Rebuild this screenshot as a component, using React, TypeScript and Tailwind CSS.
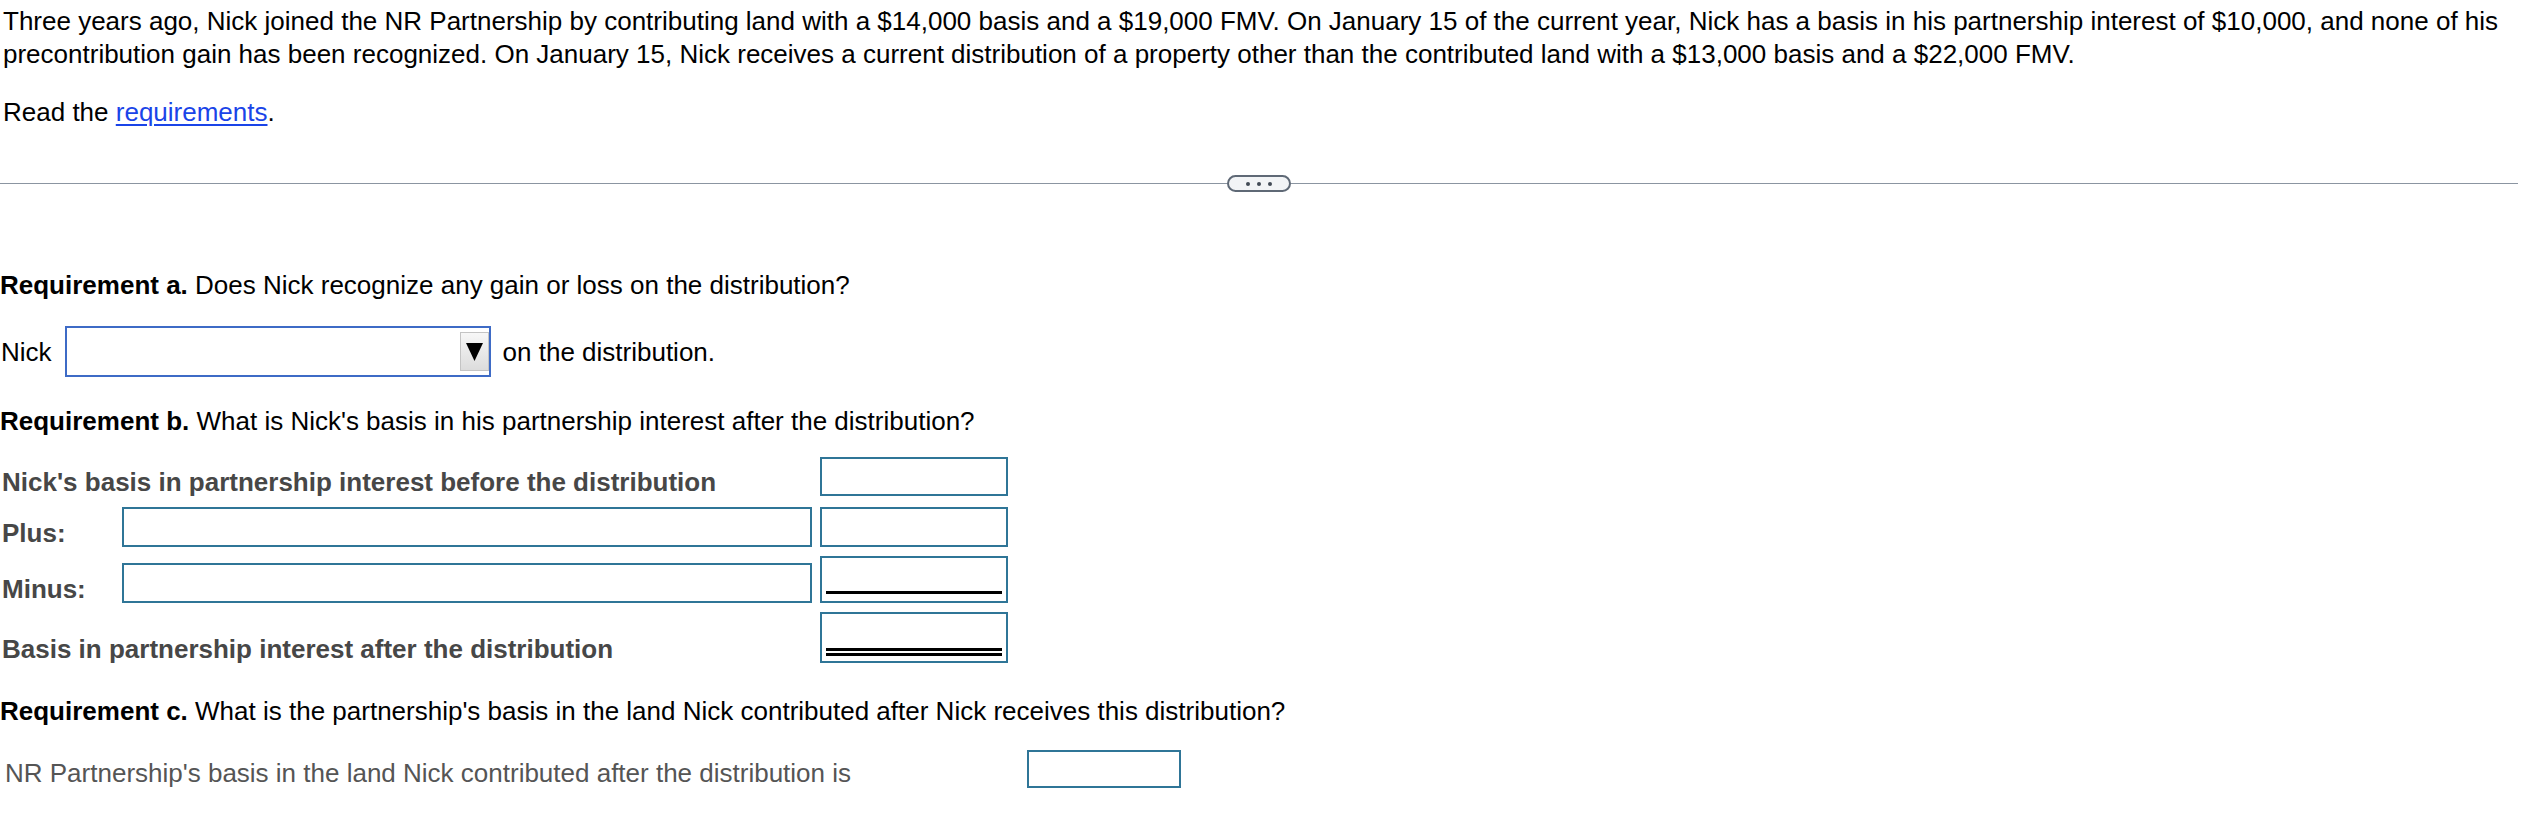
import React from "react";

const boxCls = "shrink-0 border-2 border-[#2f7597] bg-white";

function AmountBox({ h, line }: { h: string; line?: "single" | "double" }) {
  return (
    <div className={`${boxCls} ml-[8px] w-[188px] ${h} flex flex-col justify-end px-[4px] ${line === "double" ? "pb-[5px]" : "pb-[7px]"}`}>
      {line === "single" && <div className="h-[3px] bg-black" />}
      {line === "double" && <div className="h-[8px] border-y-[3px] border-black" />}
    </div>
  );
}

export default function App() {
  return (
    <div className="min-h-screen bg-white font-['Liberation_Sans',Arial,sans-serif] text-[26px] text-black">
      <p className="pl-[3px] pt-[5px] leading-[33px]">
        Three years ago, Nick joined the NR Partnership by contributing land with a $14,000 basis and a $19,000 FMV. On January 15 of the
        current year, Nick has a basis in his partnership interest of $10,000, and none of his precontribution gain has been recognized. On
        January 15, Nick receives a current distribution of a property other than the contributed land with a $13,000 basis and a $22,000 FMV.
      </p>
      <p className="mt-[25px] pl-[3px] leading-[33px]">
        Read the{" "}
        <a href="#" className="text-[#1a44e8] underline underline-offset-[3px]">
          requirements
        </a>
        .
      </p>

      {/* divider */}
      <div className="mt-[46px] flex h-[17px] items-center pr-[14px]">
        <div className="h-px flex-1 bg-[#8b95a1]" />
        <button
          type="button"
          className="flex h-[17px] w-[64px] items-center justify-center gap-[7px] rounded-full border-2 border-[#5f6976] bg-[#f2f4f6]"
          aria-label="More"
        >
          <span className="h-[4px] w-[4px] rounded-full bg-[#424a55]" />
          <span className="h-[4px] w-[4px] rounded-full bg-[#424a55]" />
          <span className="h-[4px] w-[4px] rounded-full bg-[#424a55]" />
        </button>
        <div className="h-px flex-1 bg-[#8b95a1]" />
      </div>

      {/* Requirement a */}
      <p className="mt-[79px] leading-[28px]">
        <span className="font-bold">Requirement a.</span> Does Nick recognize any gain or loss on the distribution?
      </p>
      <div className="mt-[27px] flex items-center pl-[1px]">
        <span className="leading-[28px]">Nick</span>
        <div className="ml-[13px] flex h-[51px] w-[426px] items-center justify-end border-2 border-[#3e6bc6] bg-white">
          <div className="flex h-[39px] w-[29px] items-center justify-center border border-[#c4c4c4] bg-gradient-to-b from-[#f7f7f7] to-[#dcdcdc]">
            <svg width="17" height="18" viewBox="0 0 17 18">
              <polygon points="0,0 17,0 8.5,18" fill="#000" />
            </svg>
          </div>
        </div>
        <span className="ml-[12px] leading-[28px]">on the distribution.</span>
      </div>

      {/* Requirement b */}
      <p className="mt-[30px] leading-[28px]">
        <span className="font-bold">Requirement b.</span> What is Nick's basis in his partnership interest after the distribution?
      </p>
      <div className="mt-[22px] pl-[2px] font-bold text-[#474747]">
        <div className="flex items-end">
          <div className="w-[810px] leading-[28px]">Nick's basis in partnership interest before the distribution</div>
          <AmountBox h="h-[39px]" />
        </div>
        <div className="mt-[11px] flex items-end">
          <div className="w-[120px] leading-[28px]">Plus:</div>
          <div className={`${boxCls} h-[40px] w-[690px]`} />
          <AmountBox h="h-[40px]" />
        </div>
        <div className="mt-[9px] flex items-end">
          <div className="w-[120px] leading-[28px]">Minus:</div>
          <div className={`${boxCls} h-[40px] w-[690px]`} />
          <AmountBox h="h-[47px]" line="single" />
        </div>
        <div className="mt-[9px] flex items-end">
          <div className="w-[810px] leading-[28px]">Basis in partnership interest after the distribution</div>
          <AmountBox h="h-[51px]" line="double" />
        </div>
      </div>

      {/* Requirement c */}
      <p className="mt-[34px] leading-[28px]">
        <span className="font-bold">Requirement c.</span> What is the partnership's basis in the land Nick contributed after Nick receives
        this distribution?
      </p>
      <div className="mt-[25px] flex items-end">
        <div className="mb-[1px] w-[1027px] pl-[5px] leading-[28px] text-[#555555]">
          NR Partnership's basis in the land Nick contributed after the distribution is
        </div>
        <div className={`${boxCls} h-[38px] w-[154px]`} />
      </div>
    </div>
  );
}
